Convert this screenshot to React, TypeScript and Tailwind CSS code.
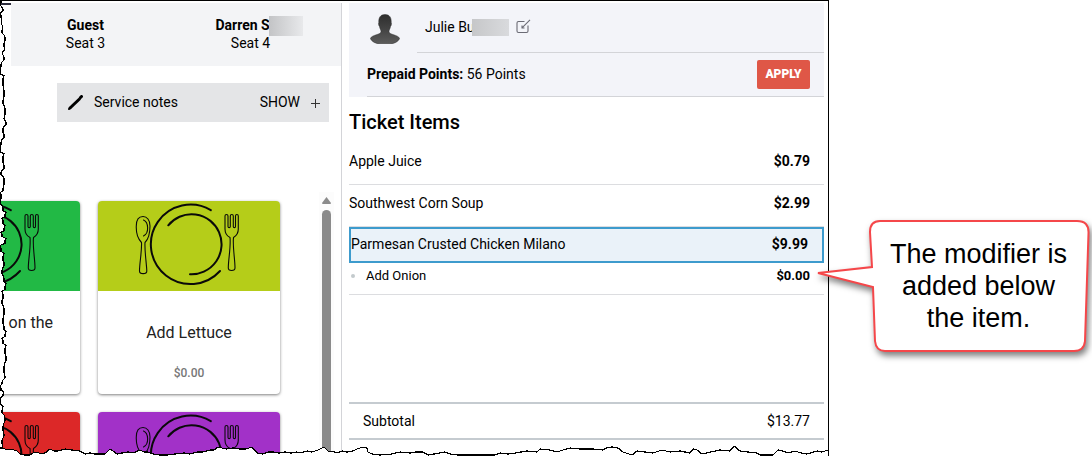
type TicketItem = {
  name: string;
  price: string;
  selected?: boolean;
  modifier?: { name: string; price: string };
};

const ticketItems: TicketItem[] = [
  { name: "Apple Juice", price: "$0.79" },
  { name: "Southwest Corn Soup", price: "$2.99" },
  {
    name: "Parmesan Crusted Chicken Milano",
    price: "$9.99",
    selected: true,
    modifier: { name: "Add Onion", price: "$0.00" },
  },
];

const PlateIcon = () => (
  <svg
    viewBox="0 0 182 90"
    className="h-[90px] w-[182px]"
    fill="none"
    stroke="#0a0a0a"
    strokeLinecap="round"
    strokeLinejoin="round"
    aria-hidden="true"
  >
    <g strokeWidth="2">
      <path d="M112.8 9.2A39.7 39.7 0 1 0 122 70" />
      <path d="M70.3 24.3A30 30 0 1 1 92 73.2" />
    </g>
    <g strokeWidth="1.1">
      <path d="M43.5 41.5C40 38 38 32 38.3 25C38.3 19 41 15.5 45 15.5C49 15.500 52 19 52 25C52 32 50.5 38 47 41.5C46.5 50 48.500 62 48.8 70C48.8 73.5 41.5 73.5 41.5 70C41.5 62 44 50 43.5 41.5Z" />
      <path d="M45.5 19C50.5 21 51.5 32 45.5 35" />
      <path d="M127 15C127 13 130 13 130 15V25.5C130 27 132.3 27 132.3 25.5V15C132.3 13 135.3 13 135.3 15V25.5C135.3 27 137.5 27 137.5 25.5V15C137.5 13 140.3 13 140.3 15V28C140.3 33 138 35 135.5 36.5C134.5 46 137 58 137 67C137 70.3 130.3 70.3 130.3 67C130.3 58 133 46 132 36.5C129 35 127 33 127 28Z" />
    </g>
  </svg>
);

type MenuCardProps = {
  color: string;
  title?: string;
  price?: string;
  titleClass?: string;
};

const MenuCard = ({ color, title, price, titleClass = "text-center" }: MenuCardProps) => (
  <button
    type="button"
    className="flex h-[193px] w-[182px] shrink-0 flex-col overflow-hidden rounded bg-white shadow-[0_1px_3px_rgba(0,0,0,0.5)]"
  >
    <span className={`block ${color}`}>
      <PlateIcon />
    </span>
    <span className={`block w-full text-base leading-5 text-[#222] ${titleClass}`}>{title}</span>
    {price && (
      <span className="mt-auto mb-[11px] block w-full text-center text-xs leading-5 font-medium text-[#777]">
        {price}
      </span>
    )}
  </button>
);

const GuestPanel = () => (
  <section className="flex w-[342px] shrink-0 flex-col border-r border-[#d3d4d8]">
    <div className="flex">
      <div className="h-[2px] w-[11px] bg-[#2d2d3d]" />
      <div className="grid h-[63px] flex-1 grid-cols-[149px_1fr] bg-[#f3f4f6] pt-[13px] text-center text-sm leading-[18px]">
        <div>
          <p className="font-bold">Guest</p>
          <p>Seat 3</p>
        </div>
        <div>
          <p className="relative mx-auto w-[70px] text-left font-bold">
            Darren S
            <span className="absolute top-0 left-[53px] h-5 w-[34px] bg-linear-to-r from-[#c3c4c6] to-[#e8e9eb]" />
          </p>
          <p>Seat 4</p>
        </div>
      </div>
    </div>

    <div className="mt-[17px] mr-3 ml-[57px] flex h-[39px] items-center bg-[#e4e5e7] pr-2 pb-[2px] pl-[11px] text-sm">
      <svg viewBox="0 0 15 15" className="mt-[2px] h-[15px] w-[15px]" stroke="#000" aria-hidden="true">
        <path d="M1.5 13.500L12 3.500" strokeWidth="3" />
        <path d="M12.500 2.500L13.500 1.500" strokeWidth="3" strokeLinecap="round" />
        <path d="M1 14L2.5 12.5" strokeWidth="2" strokeLinecap="round" />
      </svg>
      <span className="ml-[11px]">Service notes</span>
      <button type="button" className="ml-auto flex items-center gap-[10px] uppercase">
        Show
        <svg viewBox="0 0 11 11" className="mt-1 h-[11px] w-[11px]" stroke="#333" aria-hidden="true">
          <path d="M5.5 1V10M1 5.5H10" />
        </svg>
      </button>
    </div>

    <div className="mt-[70px] flex min-h-0 flex-1 overflow-hidden">
      <div className="flex flex-1 flex-col gap-[18px] overflow-hidden pt-[9px]">
        <div className="flex gap-[18px]">
          <div className="flex w-[80px] shrink-0 justify-end">
            <MenuCard
              color="bg-[#22b945]"
              title="on the"
              titleClass="mt-[22px] pr-[27px] text-right"
            />
          </div>
          <MenuCard
            color="bg-[#b5cd19]"
            title="Add Lettuce"
            price="$0.00"
            titleClass="mt-8 text-center"
          />
        </div>
        <div className="flex gap-[18px]">
          <div className="flex w-[80px] shrink-0 justify-end">
            <MenuCard color="bg-[#dc2828]" />
          </div>
          <MenuCard color="bg-[#a231c8]" />
        </div>
      </div>
      <div className="mr-[7px] flex w-[15px] flex-col items-center bg-[#fcfcfc] pt-[5px]">
        <svg viewBox="0 0 9 7" className="h-[7px] w-[9px]" fill="#8b8b8b" aria-hidden="true">
          <path d="M4.5 0L9 6Q9 7 8 7H1Q0 7 0 6Z" />
        </svg>
        <div className="mt-[6px] w-[9px] flex-1 rounded-t-full bg-[#8b8b8b]" />
      </div>
    </div>
  </section>
);

const Avatar = () => (
  <svg viewBox="0 0 30 30" className="h-[30px] w-[30px]" aria-hidden="true">
    <defs>
      <linearGradient id="avatar" x1="0" y1="0" x2="0" y2="1">
        <stop offset="0" stopColor="#2e2e2e" />
        <stop offset="0.6" stopColor="#484848" />
        <stop offset="1" stopColor="#5c5c5c" />
      </linearGradient>
    </defs>
    <path
      fill="url(#avatar)"
      stroke="#2b2b2b"
      strokeWidth="0.5"
      d="M15 0.5C19.5 0.5 21.5 3.5 21.2 8.5C21.8 9 21.3 12 20.5 12.5C20 15 19 16 19 17.5C19 21 28 20.5 29.7 24.5C28 28 24 29.8 20 29.8H10C6 29.8 2 28 0.3 24.5C2 20.5 11 21 11 17.5C11 16 10 15 9.5 12.5C8.7 12 8.2 9 8.8 8.5C8.5 3.5 10.5 0.5 15 0.5Z"
    />
  </svg>
);

const CustomerHeader = () => (
  <header className="bg-[#f3f4f9] text-sm">
    <div className="flex h-[50px]">
      <div className="w-[68px] shrink-0 pt-[11px] pl-[21px]">
        <Avatar />
      </div>
      <div className="flex flex-1 items-center border-b border-[#d3d4d8] pb-[2px] pl-2">
        <span className="relative w-[84px]">
          Julie Bu
          <span className="absolute top-[2px] left-[47px] h-[17px] w-[37px] bg-linear-to-r from-[#c6c7c9] to-[#d9dadd]" />
        </span>
        <button type="button" aria-label="Edit customer" className="ml-[7px]">
          <svg
            viewBox="0 0 15 15"
            className="h-[15px] w-[15px]"
            fill="none"
            stroke="#6b6b75"
            strokeWidth="1.1"
            aria-hidden="true"
          >
            <path d="M8.5 2.5H2.5Q1 2.5 1 4V12Q1 13.5 2.5 13.5H10.5Q12 13.5 12 12V6.5" />
            <path d="M14 0.8L6.5 8.3M6 6.5V9H8.500" />
          </svg>
        </button>
      </div>
    </div>
    <div className="ml-[18px] flex h-[44px] items-center border-b border-[#d3d4d8] pr-[14px]">
      <p className="pb-[2px]">
        <span className="font-bold">Prepaid Points:</span> 56 Points
      </p>
      <button
        type="button"
        className="ml-auto h-[29px] w-[53px] rounded-xs bg-[#df5747] pb-[2px] text-xs font-black text-white"
      >
        APPLY
      </button>
    </div>
  </header>
);

const TicketPanel = () => (
  <section className="flex min-w-0 flex-1 flex-col pr-1 pb-4 pl-[7px]">
    <CustomerHeader />
    <h2 className="mt-3 mb-2 text-xl leading-[26px] font-medium">Ticket Items</h2>
    <ul className="text-sm">
      {ticketItems.map((item) => (
        <li key={item.name} className="border-b border-[#dcdde0]">
          <div
            className={
              item.selected
                ? "flex h-9 items-center justify-between border-2 border-[#3d9bcd] bg-[#eaf2f9] pr-[14px] pb-[2px]"
                : "flex h-[41px] items-center justify-between pr-[14px] pb-[6px]"
            }
          >
            <span>{item.name}</span>
            <span className="font-bold">{item.price}</span>
          </div>
          {item.modifier && (
            <div className="flex h-[31px] items-start pt-1 pr-[14px] pl-[2px] text-[13px] leading-[18px]">
              <span className="mt-[7px] h-1 w-1 rounded-full bg-[#c3cacd]" />
              <span className="ml-[11px]">{item.modifier.name}</span>
              <span className="ml-auto font-bold">{item.modifier.price}</span>
            </div>
          )}
        </li>
      ))}
    </ul>
    <div className="mt-auto flex h-[38px] items-center justify-between border-y-2 border-[#c5cbd0] px-[14px] text-sm">
      <span>Subtotal</span>
      <span>$13.77</span>
    </div>
  </section>
);

const leftTear =
  "1,0 1,5 3,8 1,14 1,22 3,26 2,30 5,36 4,42 5,48 2,52 4,56 1,64 0,70 3,78 4,90 3,100 5,108 4,118 6,122 3,128 4,134 1,142 0,148 3,156 4,165 1,172 4,178 3,188 1,194 0,200 3,208 5,214 3,220 4,228 2,234 5,240 1,248 3,256 4,262 2,270 4,278 5,286 3,294 2,300 4,308 3,318 4,326 5,334 3,340 5,348 6,356 4,366 5,376 2,382 1,388 3,394 0,400 2,410 5,418 3,426 4,434 2,440 3,446 2,448";

const bottomTear =
  "0,4 2,4 8,6 11,5 17,7 20,10 24,11 30,11 33,9 37,8 41,10 45,9 50,5 54,7 58,7 65,5 72,6 80,7 85,10 90,9 95,10 100,10 105,10 110,5 113,7 117,10 122,9 128,8 133,9 140,6 144,8 148,8 153,10 160,11 167,11 175,10 184,9 190,10 197,8 203,8 210,6 214,6 218,3 226,5 233,4 240,5 246,5 252,3 257,9 263,10 268,8 273,8 279,9 285,8 291,9 297,8 300,9 307,7 312,8 318,6 324,3 329,8 332,7 337,9 342,7 347,8 353,7 357,5 363,3 367,4 368,8 372,10 380,11 392,10 396,9 400,8 410,9 416,8 423,8 428,11 434,10 440,9 445,8 450,10 458,11 495,11 500,9 508,10 516,9 521,8 527,7 537,8 540,5 550,6 557,8 563,6 570,4 580,5 593,5 603,6 606,4 612,3 618,4 623,8 632,11 637,7 645,8 653,9 662,6 670,8 680,7 690,9 693,5 697,6 702,10 711,8 720,6 730,7 734,2 740,7 748,8 757,9 760,11 773,11 778,6 783,7 788,9 795,7 801,9 807,10 817,7 822,8 828,6";

// Adds a small notch in the middle of every long vertical step of the tear.
const roughen = (points: string) => {
  const list = points.split(" ").map((p) => p.split(",").map(Number));
  return list
    .flatMap(([x, y], i) => {
      const next = list[i + 1];
      if (!next || next[1] - y < 5) return [`${x},${y}`];
      const mid = Math.round((y + next[1]) / 2);
      const notch = next[0] + (i % 2 ? 1 : -1);
      return [`${x},${y}`, `${x},${mid - 1}`, `${Math.max(0, notch)},${mid + 1}`];
    })
    .join(" ");
};

const leftEdge = roughen(leftTear);

const TornEdges = () => (
  <>
    <svg
      viewBox="0 0 8 448"
      preserveAspectRatio="none"
      shapeRendering="crispEdges"
      className="pointer-events-none absolute top-0 left-0 h-[calc(100%-8px)] w-2"
      aria-hidden="true"
    >
      <polygon points={`-2,0 ${leftEdge} -2,448`} fill="#fff" />
      <polyline points={leftEdge} fill="none" stroke="#000" strokeWidth="1.2" />
    </svg>
    <svg
      viewBox="0 0 828 12"
      preserveAspectRatio="none"
      shapeRendering="crispEdges"
      className="pointer-events-none absolute bottom-0 left-0 h-3 w-full"
      aria-hidden="true"
    >
      <polygon points={`${bottomTear} 830,6 830,14 0,14`} fill="#fff" />
      <polyline points={bottomTear} fill="none" stroke="#000" strokeWidth="1.2" />
    </svg>
  </>
);

const Callout = () => (
  <aside className="w-[263px] shrink-0 pt-[220px] pr-1 pl-10">
    <div className="relative">
      <svg
        viewBox="0 0 280 150"
        className="absolute -top-2 -left-[57px] h-[150px] w-[280px] overflow-visible"
        aria-hidden="true"
      >
        <path
          d="M68 9H265Q277 9 276.5 21L273 129Q272 139 262 139H73Q64 139 63 129L61 75L6 61L60 55L58 20Q58 9 68 9Z"
          fill="#fff"
          stroke="#f5474a"
          strokeWidth="2"
          strokeLinejoin="miter"
          className="drop-shadow-[2px_4px_3px_rgba(0,0,0,0.5)]"
        />
      </svg>
      <p className="relative px-4 pt-[18px] text-center font-['Liberation_Sans',Arial,sans-serif] text-[27px] leading-8">
        The modifier is added below the item.
      </p>
    </div>
  </aside>
);

const App = () => {
  return (
    <main className="flex h-screen overflow-hidden bg-white font-[Roboto,sans-serif] text-black">
      <div className="relative flex min-w-0 flex-1 border-t border-r border-black pt-[2px]">
        <GuestPanel />
        <TicketPanel />
        <TornEdges />
      </div>
      <Callout />
    </main>
  );
};

export default App;
